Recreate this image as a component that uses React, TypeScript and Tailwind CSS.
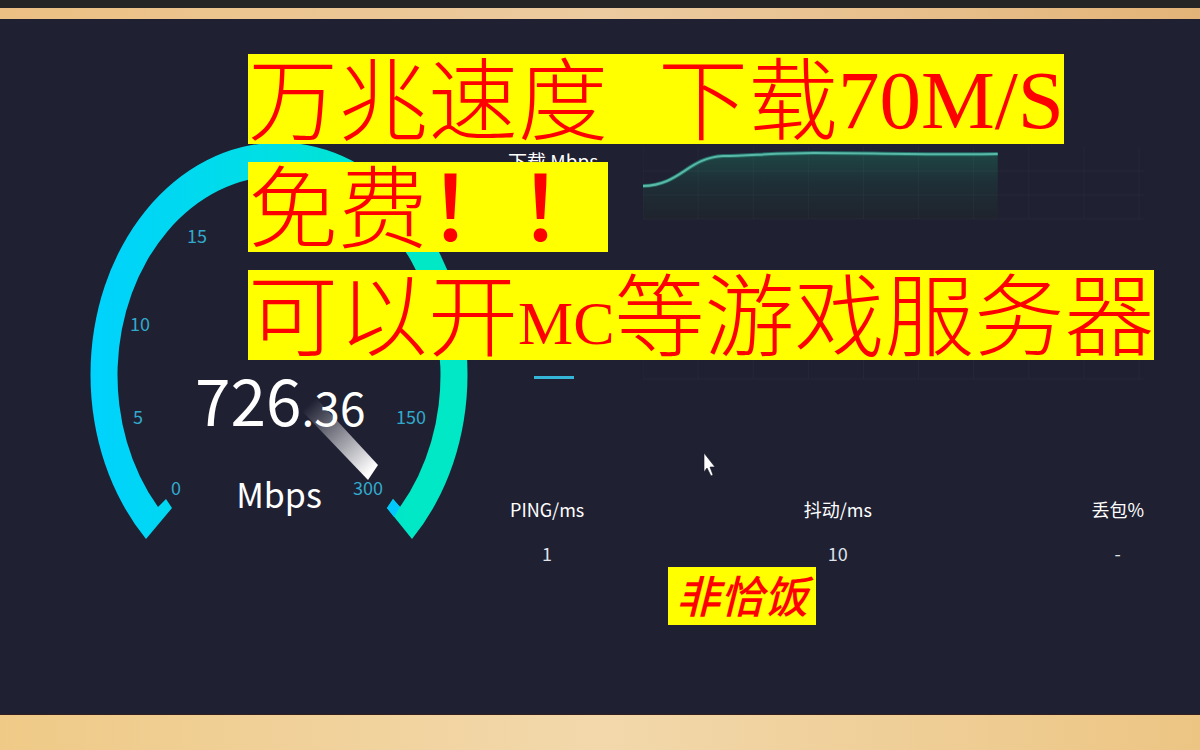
import React from "react";

interface TickI {
    label: string;
    x: number;
    y: number;
}

interface StatI {
    name: string;
    value: string;
}

const ticks: TickI[] = [
    { label: "0", x: 176, y: 495 },
    { label: "5", x: 138, y: 424 },
    { label: "10", x: 140, y: 331 },
    { label: "15", x: 197, y: 243 },
    { label: "150", x: 411, y: 424 },
    { label: "300", x: 368, y: 495 },
];

const stats: StatI[] = [
    { name: "PING/ms", value: "1" },
    { name: "抖动/ms", value: "10" },
    { name: "丢包%", value: "-" },
];

const Gauge = () => {
    return (
        <svg
            viewBox="90 143 380 400"
            className="block w-[380px] shrink-0 self-start overflow-visible"
            role="img"
            aria-label="726.36 Mbps"
        >
            <defs>
                <linearGradient id="arc" x1="0" y1="0" x2="1" y2="0">
                    <stop offset="0" stopColor="#00d2fd" />
                    <stop offset="0.45" stopColor="#00dee6" />
                    <stop offset="0.85" stopColor="#00e8c6" />
                    <stop offset="1" stopColor="#00e8c6" />
                </linearGradient>
                <linearGradient
                    id="needle"
                    gradientUnits="userSpaceOnUse"
                    x1="308"
                    y1="405"
                    x2="370"
                    y2="472"
                >
                    <stop offset="0" stopColor="#ffffff" stopOpacity="0" />
                    <stop offset="1" stopColor="#ffffff" />
                </linearGradient>
            </defs>

            <path
                d="M146 539 A188.5 232 0 1 1 412 539 L387 508 L393 499 L400 507 A161.5 199 0 1 0 158 507 L166 499 L172 508 Z"
                fill="url(#arc)"
            />
            <path d="M387 508 L393 499 L400 507 L394 517 Z" fill="#00c8ff" />

            {ticks.map((tick) => (
                <text
                    key={tick.label}
                    x={tick.x}
                    y={tick.y}
                    textAnchor="middle"
                    className="fill-[#32a9cc] text-[18px]"
                >
                    {tick.label}
                </text>
            ))}

            <text x="195" y="426" className="fill-white text-[64px]">
                726
                <tspan className="text-[46px]">.36</tspan>
            </text>
            <path
                d="M302 411 L316 398 L378 465 L368 480 Z"
                fill="url(#needle)"
            />
            <text
                x="279"
                y="508"
                textAnchor="middle"
                className="fill-white text-[34px]"
            >
                Mbps
            </text>
        </svg>
    );
};

const ChartGrid = () => {
    return (
        <g stroke="#ffffff" strokeOpacity="0.03">
            {[0, 1, 2, 3, 4, 5, 6, 7, 8, 9].map((i) => (
                <path key={i} d={`M${i * 55} 4 V76`} />
            ))}
            <path d="M0 28 H500 M0 52 H500 M0 76 H500" />
        </g>
    );
};

const SpeedChart = () => {
    return (
        <svg
            viewBox="0 0 500 80"
            preserveAspectRatio="none"
            className="h-20 min-w-0 flex-1"
            aria-hidden="true"
        >
            <defs>
                <linearGradient id="area" x1="0" y1="0" x2="0" y2="1">
                    <stop offset="0" stopColor="#1e4644" />
                    <stop offset="0.45" stopColor="#1e2f37" />
                    <stop offset="1" stopColor="#1f232d" />
                </linearGradient>
            </defs>
            <path
                d="M0 43 C38 42 44 15 80 13 C105 13 130 10 170 10 C230 10 290 12 354 11 V76 H0 Z"
                fill="url(#area)"
            />
            <ChartGrid />
            <path
                d="M0 43 C38 42 44 15 80 13 C105 13 130 10 170 10 C230 10 290 12 354 11"
                fill="none"
                stroke="#226c66"
                strokeWidth="4"
            />
            <path
                d="M0 43 C38 42 44 15 80 13 C105 13 130 10 170 10 C230 10 290 12 354 11"
                fill="none"
                stroke="#5ab8a6"
                strokeWidth="2"
            />
        </svg>
    );
};

const Headline = () => {
    return (
        <h1 className="absolute top-[35px] left-[248px] flex flex-col items-start gap-[18px] text-[90px] leading-[80px] font-light whitespace-nowrap text-[#ff0000]">
            <span className="block h-[90px] bg-[#ffff00]">
                万兆速度
                <span className="ml-[50px]">下载</span>
                <span className="align-[5px] font-['Liberation_Serif',serif] text-[83px] leading-none font-normal">
                    70M/S
                </span>
            </span>
            <span className="block h-[90px] bg-[#ffff00]">
                免费<span className="font-medium">！！</span>
            </span>
            <span className="block h-[90px] bg-[#ffff00]">
                可以开
                <span className="align-[5px] font-['Liberation_Serif',serif] text-[62px] leading-none font-normal">
                    MC
                </span>
                等游戏服务器
            </span>
        </h1>
    );
};

const App = () => {
    return (
        <div className="flex min-h-screen flex-col bg-[#1f2133] font-['Noto_Sans_CJK_SC',sans-serif]">
            <div className="h-2 bg-[#252525]" />
            <div className="h-[11px] bg-linear-to-r from-[#ecc083] via-[#eccba0] to-[#e3b478]" />

            <main className="relative flex flex-1 gap-[38px] pt-[124px] pr-14 pl-[90px] text-white">
                <Gauge />

                <section className="flex min-w-0 flex-1 flex-col">
                    <div className="flex">
                        <p className="w-[135px] pt-1 text-[19px] leading-7">
                            下载 Mbps
                        </p>
                        <SpeedChart />
                    </div>

                    <div className="mt-20 flex items-end">
                        <div className="w-[135px] pb-1">
                            <div className="ml-[26px] h-[3px] w-10 bg-[#35b5d8]" />
                        </div>
                        <svg
                            viewBox="0 0 500 80"
                            preserveAspectRatio="none"
                            className="h-20 min-w-0 flex-1"
                            aria-hidden="true"
                        >
                            <ChartGrid />
                        </svg>
                    </div>

                    <dl className="mt-28 flex justify-between pl-0.5 text-center text-[18px] leading-7">
                        {stats.map((stat) => (
                            <div key={stat.name}>
                                <dt>{stat.name}</dt>
                                <dd className="mt-4 text-[#dfe2ea]">
                                    {stat.value}
                                </dd>
                            </div>
                        ))}
                    </dl>
                </section>

                <Headline />

                <p className="absolute top-[548px] left-[668px] h-[58px] bg-[#ffff00] pr-2 pl-2 text-[44px] leading-[54px] font-medium whitespace-nowrap text-[#ff0000] italic">
                    非恰饭
                </p>

                <svg
                    viewBox="0 0 14 26"
                    className="absolute top-[433px] left-[703px] h-[26px] w-[14px]"
                    aria-hidden="true"
                >
                    <path
                        d="M1 1 V20 L4 16 L8 24 L10 23 L7 15 H12 Z"
                        fill="#ffffff"
                        stroke="#11131f"
                        strokeWidth="0.6"
                    />
                </svg>
            </main>

            <div className="h-9 border-t border-[#33201f] bg-linear-to-r from-[#efca87] via-[#f2d8ab] to-[#ecc583]" />
        </div>
    );
};

export default App;
